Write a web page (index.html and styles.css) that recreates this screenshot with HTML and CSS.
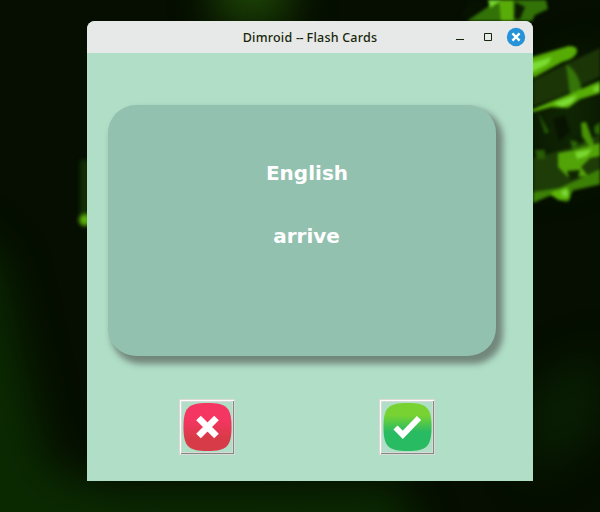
FILE: index.html
```html
<!DOCTYPE html>
<html lang="en">
<head>
<meta charset="utf-8">
<title>Dimroid -- Flash Cards</title>
<link rel="stylesheet" href="styles.css">
</head>
<body>
<svg class="wallpaper" viewBox="0 0 600 512" aria-hidden="true">
  <defs>
    <filter id="soft" x="-20%" y="-20%" width="140%" height="140%" color-interpolation-filters="sRGB"><feGaussianBlur stdDeviation="1.7"/></filter>
    <filter id="wide" x="-60%" y="-60%" width="220%" height="220%" color-interpolation-filters="sRGB"><feGaussianBlur stdDeviation="20"/></filter>
    <filter id="mid" x="-60%" y="-60%" width="220%" height="220%" color-interpolation-filters="sRGB"><feGaussianBlur stdDeviation="2"/></filter>
  </defs>
  <rect width="600" height="512" fill="#050e01"/>
  <g filter="url(#wide)">
    <path d="M-50 220L2 260L20 340L38 420L50 468L120 488L400 485L430 570H-50Z" fill="#0a2901"/>
    <rect x="215" y="-60" width="75" height="85" fill="#1c4205"/>
    <path d="M530 390L600 350V430L530 480Z" fill="#081f02"/>
    <path d="M535 80L600 50V160L535 180Z" fill="#102703"/>
  </g>
  <g filter="url(#mid)">
    <path d="M80 160H92V222H80Z" fill="#122d03"/>
    <circle cx="85" cy="220" r="6" fill="#5cae0a"/>
  </g>
  <g filter="url(#soft)">
    <path d="M533 80L600 48V76L560 96L533 106Z" fill="#1b3507"/>
    <path d="M533 158L570 148L600 134V185L533 200Z" fill="#1d3c07"/>
    <path d="M467 21L489 6L493 0H546L548 9L535 15L532 21Z" fill="#327207"/>
    <path d="M499 0H513L514 21H501Z" fill="#59ac08"/>
    <path d="M488 0H502L490 8Z" fill="#77d730"/>
    <path d="M468 0H486L484 8L470 18H460Z" fill="#071201"/>
    <path d="M515 2L525 7L520 19H514Z" fill="#0b1b02"/>
    <path d="M526 59L569 46Q578 46 577 52Q575 59 562 62L533 78Z" fill="#56ac04"/>
    <path d="M530 63L552 57L548 64L530 73Z" fill="#7bdc31"/>
    <path d="M566 64Q579 72 582 91L570 95Q568 80 566 64Z" fill="#347408"/>
    <path d="M531 110L560 98L577 91L600 81V93L580 99L568 108L551 107L533 112Z" fill="#57ae06"/>
    <path d="M554 103L577 95L572 103L562 107Z" fill="#7ddd35"/>
    <path d="M593 88L600 84V91L594 92Z" fill="#75d12a"/>
    <path d="M538 112L549 132L545 134Z" fill="#245807"/>
    <path d="M581 123L586 122L594 144L590 148L582 136Z" fill="#489305"/>
    <path d="M594 127L600 122V134H595Z" fill="#2b6805"/>
    <path d="M535 150H545V159H537Z" fill="#295c05"/>
    <path d="M570 140L578 142L576 147L588 143L587 148L573 151Z" fill="#2d6507"/>
    <path d="M558 153L575 150L600 143V156L590 158L581 167L588 176L568 177L558 167Z" fill="#52a307"/>
    <path d="M575 152L592 149L587 156L577 159Z" fill="#7ad72f"/>
    <path d="M567 171L580 170L578 178L570 180Z" fill="#102502"/>
    <path d="M533 192L559 188L577 180L600 169V184L573 190L568 202L558 200L551 195L533 203Z" fill="#3c8006"/>
    <path d="M552 192L568 187L570 199L561 200L551 195Z" fill="#5cb607"/>
    <circle cx="565" cy="193" r="3.5" fill="#7bd737"/>
    <path d="M553 119L565 115L570 132L559 142Z" fill="#081401"/>
  </g>
</svg>
<main class="window">
  <header class="titlebar">
    <h1 class="title">Dimroid <span class="dash">--</span> Flash Cards</h1>
    <div class="controls">
      <svg width="76" height="20" viewBox="0 0 76 20" aria-hidden="true">
        <path d="M3 12.5H11" stroke="#142406" stroke-width="1"/>
        <path d="M31.5 6.5H38.5V13.5H31.5Z" fill="none" stroke="#142406"/>
        <circle cx="63" cy="10" r="9.2" fill="#2693d8"/>
        <path d="M59.400 6.400L66.600 13.600M66.600 6.400L59.400 13.600" stroke="#fff" stroke-width="2.300"/>
      </svg>
    </div>
  </header>
  <section class="content">
    <article class="card">
      <p class="language">English</p>
      <p class="word">arrive</p>
    </article>
    <div class="actions">
      <button class="answer" aria-label="Unknown">
        <svg width="50" height="50" viewBox="0 0 50 50">
          <defs><linearGradient id="red" x2="0" y2="1"><stop offset=".35" stop-color="#f53562"/><stop offset=".72" stop-color="#d83b48"/></linearGradient></defs>
          <path d="M25.5 1C45 1 49.5 6 49.5 25S45 49 25.5 49S1.500 44 1.500 25S6 1 25.500 1Z" fill="url(#red)"/>
          <path d="M16.500 16L34.500 34M34.500 16L16.500 34" stroke="#fff" stroke-width="6.500"/>
        </svg>
      </button>
      <button class="answer" aria-label="Known">
        <svg width="50" height="50" viewBox="0 0 50 50">
          <defs><linearGradient id="green" x2="0" y2="1"><stop offset=".25" stop-color="#78d332"/><stop offset=".6" stop-color="#29bb62"/></linearGradient></defs>
          <path d="M25.5 1C45 1 49.5 6 49.5 25S45 49 25.5 49S1.500 44 1.500 25S6 1 25.500 1Z" fill="url(#green)"/>
          <path d="M13.500 25.500L20.800 32.800L37 16" fill="none" stroke="#fff" stroke-width="5.800"/>
        </svg>
      </button>
    </div>
  </section>
</main>
</body>
</html>
```
FILE: styles.css
```css
* { box-sizing: border-box; }
body {
  margin: 0;
  height: 512px;
  padding: 21px 67px 31px 87px;
  overflow: hidden;
  background: #050e01;
}
.wallpaper {
  position: absolute;
  z-index: -1;
  inset: 0;
  width: 600px;
  height: 512px;
}
.window {
  width: 446px;
  height: 460px;
  display: flex;
  flex-direction: column;
  overflow: hidden;
  border-radius: 8px 8px 0 0;
  background: #b0dec7;
}
.titlebar {
  height: 32px;
  display: grid;
  grid-template-columns: 80px 1fr 80px;
  align-items: center;
  background: #e7e9e8;
}
.title {
  grid-column: 2;
  margin: 0;
  padding-top: 1px;
  text-align: center;
  white-space: nowrap;
  font: 500 12.5px/31px "Noto Sans", sans-serif;
  letter-spacing: 0.22px;
  color: #172608;
}
.dash { letter-spacing: -0.4px; }
.controls { height: 20px; }
.controls svg { display: block; }
.content {
  flex: 1;
  padding: 52px 37px 0 21px;
}
.card {
  height: 251px;
  padding-top: 56px;
  border-radius: 28px;
  background: #92c1af;
  box-shadow: 5px 6px 6px 2px #72877b;
  color: #fff;
  text-align: center;
  font: bold 20px/24px "DejaVu Sans", sans-serif;
}
.card p { margin: 0; padding-left: 10px; }
.card .word { margin-top: 39px; padding-left: 9px; }
.actions {
  display: flex;
  gap: 144px;
  padding: 43px 0 0 71px;
}
.answer {
  width: 56px;
  height: 56px;
  padding: 1px;
  border: 1px solid #d9d9d5;
  background: #b0dec7;
  box-shadow: inset 1px 1px #fff, inset -1px -1px #828a85, inset 2px 2px #d9d9d5, inset -2px -2px #d9d9d5;
}
.answer svg { display: block; margin: 1px; }
```
